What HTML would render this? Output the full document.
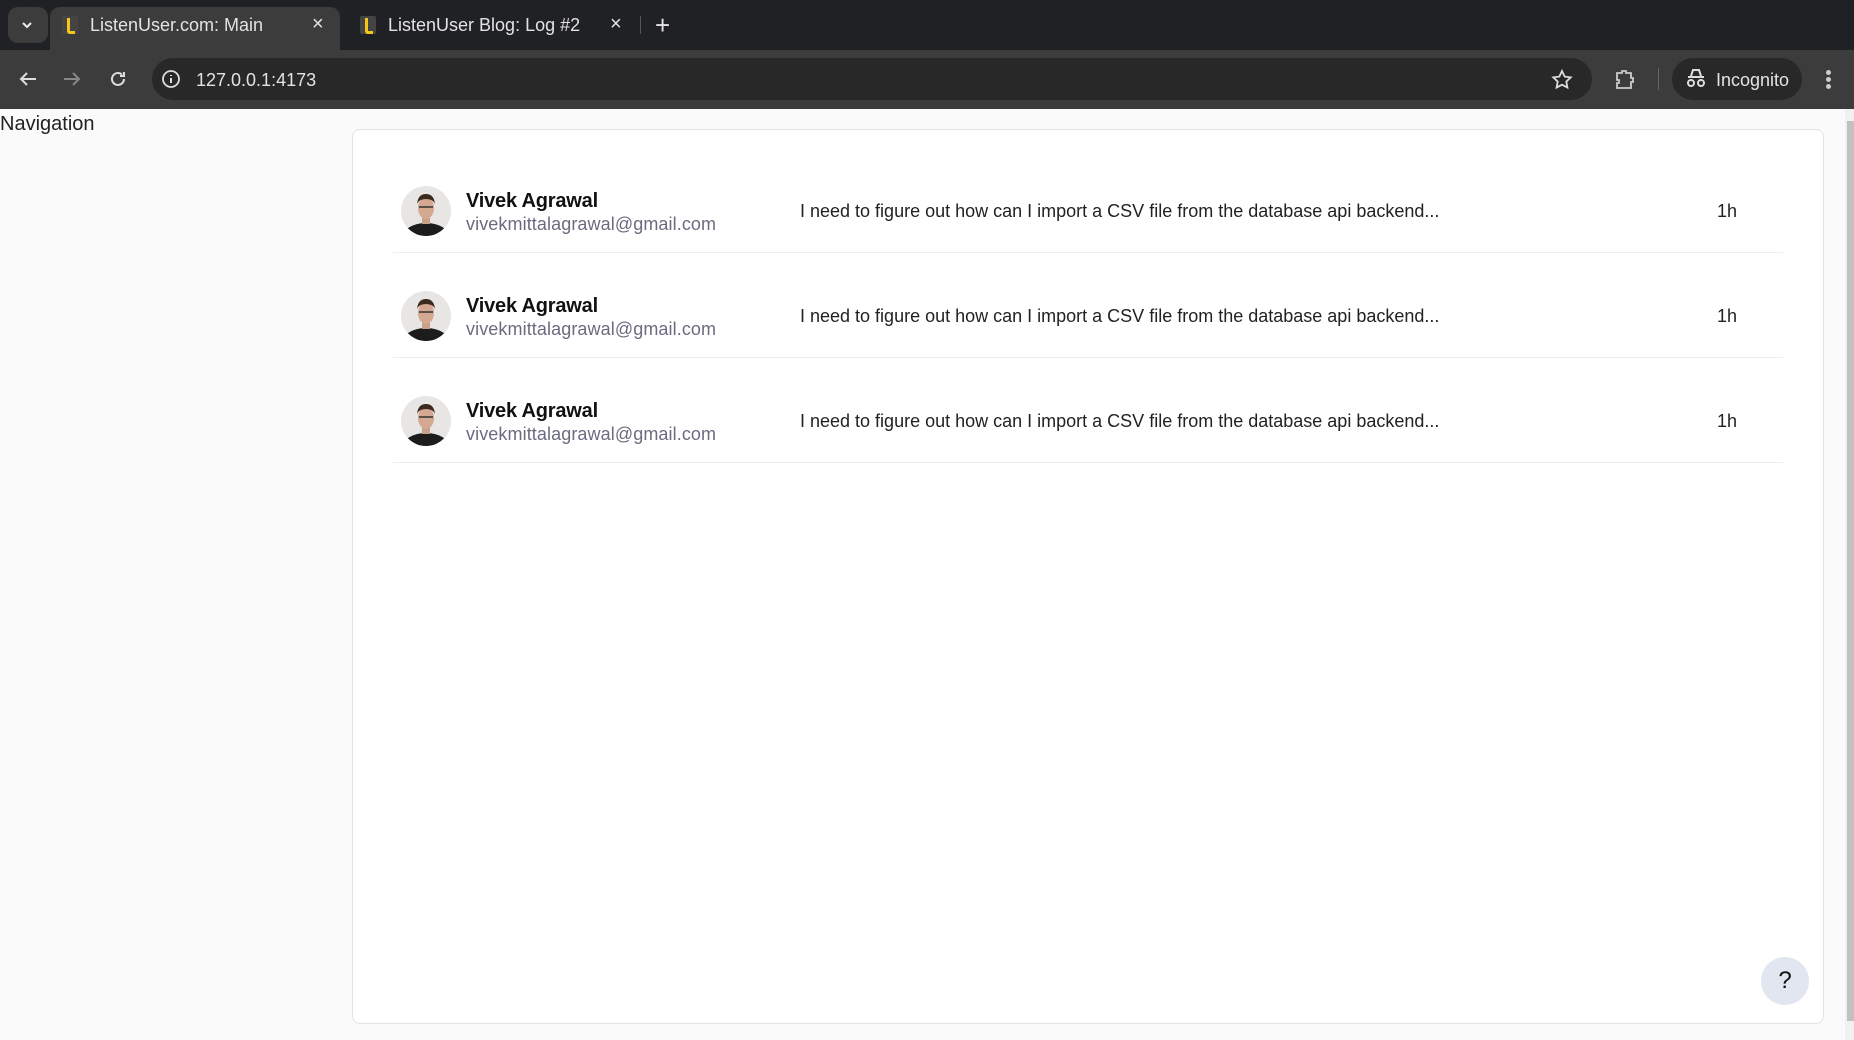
<!DOCTYPE html>
<html><head><meta charset="utf-8"><style>
*{box-sizing:border-box;margin:0;padding:0}
body{width:1854px;height:1040px;overflow:hidden;background:#fafafa;font-family:"Liberation Sans",sans-serif;position:relative}
.tabbar{position:absolute;left:0;top:0;width:1854px;height:50px;background:#202124}
.toolbar{position:absolute;left:0;top:50px;width:1854px;height:59px;background:#3c3c3c}
.abs{position:absolute}
.tab{position:absolute;top:7px;height:43px;background:#3c3c3c;border-radius:10px 10px 0 0}
.ttl{position:absolute;color:#e3e3e3;font-size:18px;top:15px}
.fav{position:absolute;width:16px;height:18px;top:16px;background:#444;border-radius:2px}
.fav:after{content:"";position:absolute;left:5px;top:2px;width:5px;height:13px;border-left:3px solid #f5c518;border-bottom:3px solid #f5c518;border-radius:0 0 0 3px}
.omni{position:absolute;left:152px;top:58px;width:1440px;height:42px;background:#282828;border-radius:21px}
.card{position:absolute;left:352px;top:129px;width:1472px;height:895px;background:#fff;border:1px solid #e2e2e2;border-radius:8px}
.row{position:absolute;left:393px;width:1390px;height:105px;border-bottom:1px solid #ececec}
.av{position:absolute;left:8px;top:38px;width:50px;height:50px;border-radius:50%;background:#e8e6e4;overflow:hidden}
.name{position:absolute;left:73px;top:42px;font-size:20px;color:#111;font-weight:bold;letter-spacing:-.2px}
.mail{position:absolute;left:73px;top:66px;font-size:18px;color:#6b6b80;letter-spacing:.1px}
.msg{position:absolute;left:407px;top:53px;font-size:18px;color:#222;letter-spacing:0}
.time{position:absolute;left:1324px;top:53px;font-size:18px;color:#222}
</style></head><body>
<div class="tabbar"></div>
<div class="abs" style="left:8px;top:7px;width:40px;height:36px;background:#3c3c3c;border-radius:10px"></div>
<svg class="abs" style="left:19px;top:18px" width="16" height="14"><path d="M4 5l4 4 4-4" stroke="#eee" stroke-width="2" fill="none"/></svg>
<div class="tab" style="left:50px;width:290px"></div>
<div class="fav" style="left:62px"></div>
<div class="ttl" style="left:90px">ListenUser.com: Main</div>
<div class="ttl" style="left:312px;top:13px;font-size:20px">×</div>
<div class="fav" style="left:360px"></div>
<div class="ttl" style="left:388px">ListenUser Blog: Log #2</div>
<div class="ttl" style="left:610px;top:13px;font-size:20px">×</div>
<div class="abs" style="left:640px;top:16px;width:1px;height:18px;background:#555"></div>
<div class="ttl" style="left:655px;top:10px;font-size:26px">+</div>
<div class="toolbar"></div>
<svg class="abs" style="left:16px;top:68px" width="24" height="22"><path d="M20 11H5M11 5l-6 6 6 6" stroke="#ddd" stroke-width="2" fill="none"/></svg>
<svg class="abs" style="left:60px;top:68px" width="24" height="22"><path d="M4 11h15M13 5l6 6-6 6" stroke="#888" stroke-width="2" fill="none"/></svg>
<svg class="abs" style="left:106px;top:67px" width="24" height="24"><path d="M18 12a6 6 0 1 1-2-4.5M18 5v4h-4" stroke="#ddd" stroke-width="2" fill="none"/></svg>
<div class="omni"></div>
<svg class="abs" style="left:161px;top:69px" width="20" height="20"><circle cx="10" cy="10" r="8" stroke="#ddd" stroke-width="1.8" fill="none"/><path d="M10 9v5M10 6v1" stroke="#ddd" stroke-width="2"/></svg>
<div class="abs" style="left:196px;top:70px;color:#e3e3e3;font-size:18px">127.0.0.1:4173</div>
<svg class="abs" style="left:1550px;top:68px" width="24" height="24"><path d="M12 3l2.7 5.6 6 .8-4.4 4.2 1.1 6L12 16.7 6.6 19.6l1.1-6L3.3 9.4l6-.8z" stroke="#ddd" stroke-width="1.8" fill="none"/></svg>
<svg class="abs" style="left:1613px;top:67px" width="24" height="24"><path d="M4 6h5V4h4v2h5v5h2v4h-2v6H4v-5h2v-3H4z" stroke="#ccc" stroke-width="1.8" fill="none"/></svg>
<div class="abs" style="left:1658px;top:68px;width:1px;height:22px;background:#666"></div>
<div class="abs" style="left:1672px;top:58px;width:130px;height:42px;background:#282828;border-radius:21px"></div>
<svg class="abs" style="left:1685px;top:68px" width="22" height="20"><path d="M3 9h16M6 8l2-6h6l2 6" stroke="#ddd" stroke-width="2" fill="none"/><circle cx="6" cy="15" r="3" stroke="#ddd" stroke-width="2" fill="none"/><circle cx="16" cy="15" r="3" stroke="#ddd" stroke-width="2" fill="none"/></svg>
<div class="abs" style="left:1716px;top:70px;color:#e3e3e3;font-size:18px">Incognito</div>
<div class="abs" style="left:1826px;top:70px;width:5px;height:5px;border-radius:50%;background:#ccc;box-shadow:0 7px 0 #ccc,0 14px 0 #ccc"></div>

<div class="abs" style="left:0;top:113px;font-size:20px;color:#222">Navigation</div>
<div class="card"></div>

<div class="row" style="top:148px"><div class="av"><svg width="50" height="50"><ellipse cx="25" cy="52" rx="24" ry="15" fill="#1c1c1c"/><rect x="21" y="30" width="8" height="8" fill="#c9a08a"/><ellipse cx="25" cy="22" rx="8" ry="11" fill="#d4a891"/><path d="M16 18q1-10 9-10t9 10q-2-5-9-5t-9 5z" fill="#3a2a20"/><path d="M18 21h14" stroke="#333" stroke-width="1.5"/></svg></div><div class="name">Vivek Agrawal</div><div class="mail">vivekmittalagrawal@gmail.com</div><div class="msg">I need to figure out how can I import a CSV file from the database api backend...</div><div class="time">1h</div></div>
<div class="row" style="top:253px"><div class="av"><svg width="50" height="50"><ellipse cx="25" cy="52" rx="24" ry="15" fill="#1c1c1c"/><rect x="21" y="30" width="8" height="8" fill="#c9a08a"/><ellipse cx="25" cy="22" rx="8" ry="11" fill="#d4a891"/><path d="M16 18q1-10 9-10t9 10q-2-5-9-5t-9 5z" fill="#3a2a20"/><path d="M18 21h14" stroke="#333" stroke-width="1.5"/></svg></div><div class="name">Vivek Agrawal</div><div class="mail">vivekmittalagrawal@gmail.com</div><div class="msg">I need to figure out how can I import a CSV file from the database api backend...</div><div class="time">1h</div></div>
<div class="row" style="top:358px"><div class="av"><svg width="50" height="50"><ellipse cx="25" cy="52" rx="24" ry="15" fill="#1c1c1c"/><rect x="21" y="30" width="8" height="8" fill="#c9a08a"/><ellipse cx="25" cy="22" rx="8" ry="11" fill="#d4a891"/><path d="M16 18q1-10 9-10t9 10q-2-5-9-5t-9 5z" fill="#3a2a20"/><path d="M18 21h14" stroke="#333" stroke-width="1.5"/></svg></div><div class="name">Vivek Agrawal</div><div class="mail">vivekmittalagrawal@gmail.com</div><div class="msg">I need to figure out how can I import a CSV file from the database api backend...</div><div class="time">1h</div></div>

<div class="abs" style="left:1761px;top:957px;width:48px;height:48px;border-radius:50%;background:#e1e6f0;color:#111;font-size:24px;text-align:center;line-height:48px">?</div>
<div class="abs" style="left:1845px;top:109px;width:9px;height:931px;background:#f1f1f1"></div>
<div class="abs" style="left:1847px;top:121px;width:7px;height:900px;background:#c1c1c1"></div>
</body></html>
